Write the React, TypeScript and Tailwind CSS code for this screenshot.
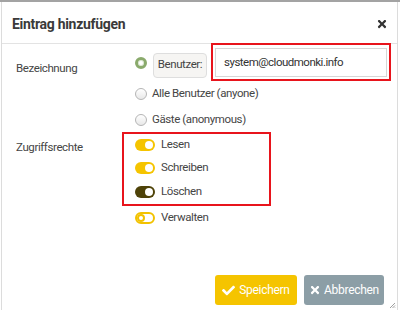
import React from "react";
import { FaCheck, FaTimes } from "react-icons/fa";

function Radio({ checked }: { checked?: boolean }) {
  return checked ? (
    <span className="inline-block w-[12px] h-[12px] rounded-full border-[3px] border-[#8aaa6c] bg-white shadow-[inset_0_0_0_1px_#dfe8d6]" />
  ) : (
    <span className="inline-block w-[12px] h-[12px] rounded-full border border-[#b5b5b5] bg-gradient-to-b from-white to-[#e8e8e8]" />
  );
}

function Toggle({ state }: { state: "on" | "dark" | "off" }) {
  if (state === "off") {
    return (
      <span className="relative inline-block w-[20px] h-[12px] rounded-full border-2 border-[#f2c200] bg-white">
        <span className="absolute left-[0px] top-[0px] w-[8px] h-[8px] rounded-full border-2 border-[#f2c200] bg-white" />
      </span>
    );
  }
  const bg = state === "on" ? "bg-[#f5c400]" : "bg-[#4e4208]";
  return (
    <span className={`relative inline-block w-[20px] h-[12px] rounded-full ${bg}`}>
      <span className="absolute right-[2px] top-[2px] w-[8px] h-[8px] rounded-full bg-white" />
    </span>
  );
}

function ToggleRow({ state, label, h = "h-[23px]" }: { state: "on" | "dark" | "off"; label: string; h?: string }) {
  return (
    <div className={`flex items-center ${h} gap-[6px]`}>
      <Toggle state={state} />
      <span>{label}</span>
    </div>
  );
}

export default function App() {
  return (
    <div
      className="w-[400px] h-[310px] bg-white border-t-2 border-[#a3a3a3] text-[11.5px] tracking-[-0.4px] text-[#454545] flex flex-col"
      style={{ fontFamily: "Roboto, 'Liberation Sans', sans-serif" }}
    >
      <div className="mx-[1px] mr-[2px] flex-1 flex flex-col border-x border-[#dcdcdc] relative">
        <div className="h-[42px] flex items-center justify-between pl-[10px] pr-[9px] pt-[3px] border-b border-[#e3e3e3]">
          <span className="text-[14px] tracking-[-0.3px] font-bold text-[#3a3a3a]">Eintrag hinzufügen</span>
          <FaTimes className="text-[#333] w-[12px] h-[12px]" />
        </div>

        <div className="flex pl-[14px] pt-[1px]">
          <div className="w-[119px] pt-[15px]">Bezeichnung</div>
          <div className="flex flex-col">
            <div className="flex items-center">
              <Radio checked />
              <div className="ml-[6px] h-[25px] w-[54px] mt-[4px] flex items-center justify-center rounded-sm border border-[#dedede] bg-[#f6f5f3] text-[#444]">
                Benutzer:
              </div>
              <div className="ml-[4px] w-[180px] h-[38px] border-2 border-[#e8141c] p-[2px] pt-[3px] mt-[-2px]">
                <div className="h-[29px] border border-[#d6d6d6] flex items-center pl-[8px] text-[11.5px] tracking-[-0.5px] text-[#333]">
                  system@cloudmonki.info
                </div>
              </div>
            </div>
            <div className="flex items-center gap-[5px] h-[26px] mt-[0px]">
              <Radio />
              <span>Alle Benutzer (anyone)</span>
            </div>
            <div className="flex items-center gap-[5px] h-[26px]">
              <Radio />
              <span>Gäste (anonymous)</span>
            </div>
          </div>
        </div>

        <div className="flex pl-[14px] mt-[-1px]">
          <div className="w-[106px] pt-[7px]">Zugriffsrechte</div>
          <div className="flex flex-col">
            <div className="w-[149px] border-2 border-[#e8141c] pl-[11px] pt-[0px] pb-[0px]">
              <ToggleRow state="on" label="Lesen" h="h-[22px]" />
              <ToggleRow state="on" label="Schreiben" h="h-[24px]" />
              <ToggleRow state="dark" label="Löschen" h="h-[24px]" />
            </div>
            <div className="pl-[13px]">
              <ToggleRow state="off" label="Verwalten" />
            </div>
          </div>
        </div>

        <div className="flex-1" />
        <div className="flex justify-end gap-[7px] pr-[13px] pb-[5px]">
          <button className="h-[30px] w-[82px] rounded-[3px] bg-[#f5c400] text-white text-[12px] tracking-[-0.3px] flex items-center justify-center gap-[4px]">
            <FaCheck className="w-[13px] h-[13px]" />
            Speichern
          </button>
          <button className="h-[30px] w-[80px] rounded-[3px] bg-[#8c9ea6] text-white text-[12px] tracking-[-0.3px] flex items-center justify-center gap-[3px]">
            <FaTimes className="w-[12px] h-[12px]" />
            Abbrechen
          </button>
        </div>
        <svg className="absolute right-[1px] bottom-[1px]" width="7" height="7" viewBox="0 0 7 7">
          <path d="M6 1L1 6M6 3.5L3.5 6M6 5.5L5.5 6" stroke="#a0a0a0" strokeWidth="1" />
        </svg>
      </div>
    </div>
  );
}
